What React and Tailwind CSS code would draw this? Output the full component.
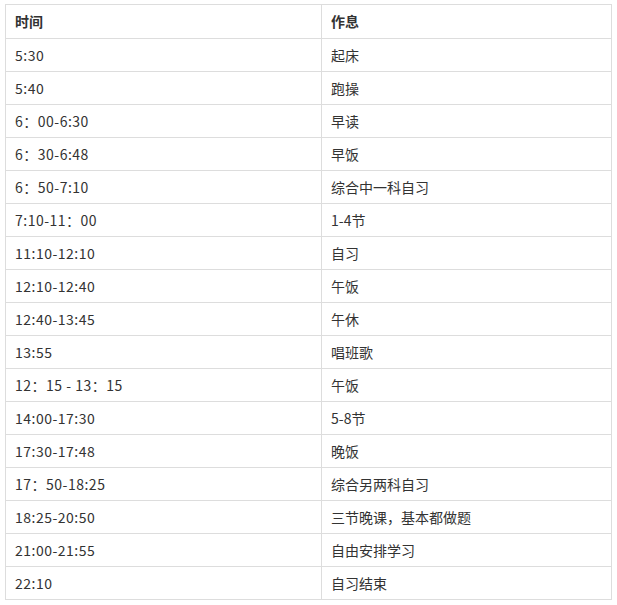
const rows = [
  ["5:30", "起床"],
  ["5:40", "跑操"],
  ["6：00-6:30", "早读"],
  ["6：30-6:48", "早饭"],
  ["6：50-7:10", "综合中一科自习"],
  ["7:10-11：00", "1-4节"],
  ["11:10-12:10", "自习"],
  ["12:10-12:40", "午饭"],
  ["12:40-13:45", "午休"],
  ["13:55", "唱班歌"],
  ["12：15 - 13：15", "午饭"],
  ["14:00-17:30", "5-8节"],
  ["17:30-17:48", "晚饭"],
  ["17：50-18:25", "综合另两科自习"],
  ["18:25-20:50", "三节晚课，基本都做题"],
  ["21:00-21:55", "自由安排学习"],
  ["22:10", "自习结束"],
];

export default function App() {
  return (
    <div className="bg-white w-[617px] h-[605px] pt-[4px] pl-[5px] font-['Noto_Sans_CJK_SC','Noto_Sans',sans-serif] text-[14px] text-[#333]">
      <table className="border-collapse w-[607px] table-fixed">
        <colgroup>
          <col className="w-[316px]" />
          <col />
        </colgroup>
        <thead>
          <tr className="h-[34px]">
            <th className="border border-[#ddd] text-left font-bold pl-[9px] pr-[10px] py-0">时间</th>
            <th className="border border-[#ddd] text-left font-bold pl-[9px] pr-[10px] py-0">作息</th>
          </tr>
        </thead>
        <tbody>
          {rows.map(([t, a], i) => (
            <tr key={i} className="h-[33px]">
              <td className="border border-[#ddd] pl-[9px] pr-[10px] py-0 tracking-[0.5px]">{t}</td>
              <td className="border border-[#ddd] pl-[9px] pr-[10px] py-0">{a}</td>
            </tr>
          ))}
        </tbody>
      </table>
    </div>
  );
}
